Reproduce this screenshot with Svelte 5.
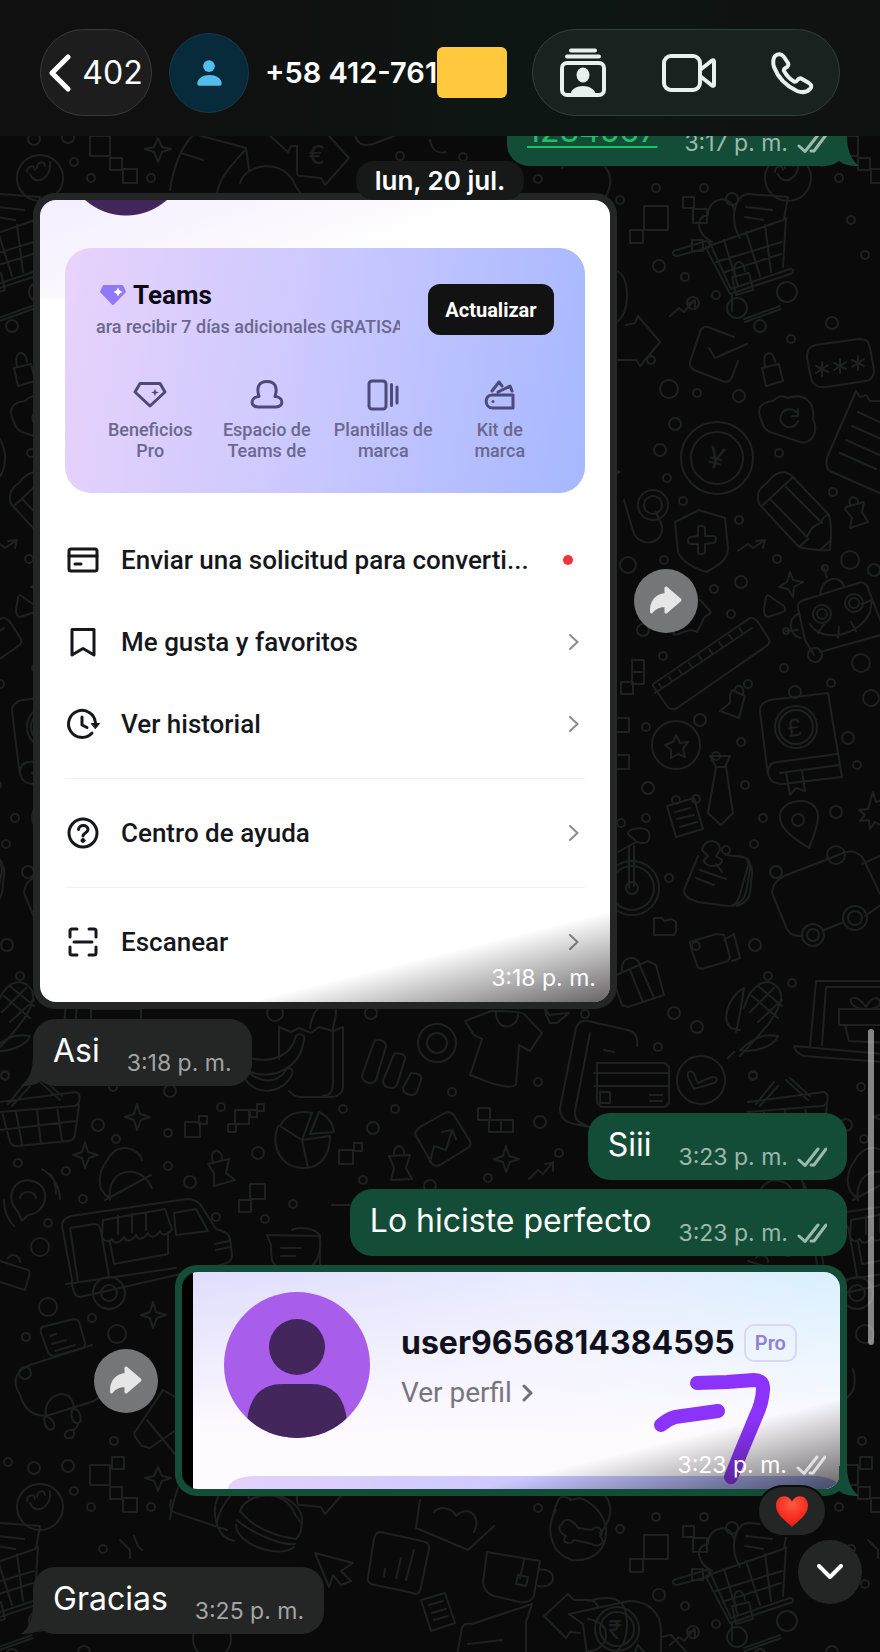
<script lang="ts">
	interface MenuItem {
		icon: string;
		label: string;
		dot?: boolean;
	}

	const menuGroups: MenuItem[][] = [
		[
			{ icon: 'card', label: 'Enviar una solicitud para converti...', dot: true },
			{ icon: 'bookmark', label: 'Me gusta y favoritos' },
			{ icon: 'history', label: 'Ver historial' }
		],
		[{ icon: 'help', label: 'Centro de ayuda' }],
		[{ icon: 'scan', label: 'Escanear' }]
	];

	const perks = [
		{ icon: 'gem', lines: ['Beneficios', 'Pro'] },
		{ icon: 'cloud', lines: ['Espacio de', 'Teams de'] },
		{ icon: 'templates', lines: ['Plantillas de', 'marca'] },
		{ icon: 'kit', lines: ['Kit de', 'marca'] }
	];

	// wallpaper: one sheet of doodles, repeated every 748 x 1329
	const sheetOffsets = [
		[-748, 0],
		[0, 0],
		[748, 0],
		[-748, 1329],
		[0, 1329],
		[748, 1329]
	];

	const dots = [
		[34, 139, 6], [68, 137, 6], [74, 162, 4], [91, 178, 4], [151, 178, 4], [400, 156, 4], [538, 179, 4],
		[463, 157, 4], [656, 188, 4], [704, 188, 4], [620, 200, 4], [732, 199, 6], [851, 220, 4],
		[659, 266, 6], [685, 277, 4], [716, 295, 4], [693, 303, 6], [865, 255, 4], [760, 326, 6], [791, 339, 4],
		[832, 323, 6], [651, 360, 4], [669, 389, 9], [697, 393, 4], [739, 396, 6], [675, 424, 6], [660, 450, 6],
		[667, 478, 4], [779, 453, 4], [683, 501, 4], [739, 520, 4], [664, 560, 4], [628, 565, 8], [741, 582, 6],
		[714, 589, 4], [833, 492, 4], [777, 559, 4], [850, 560, 9], [874, 570, 6], [643, 630, 6], [731, 614, 4],
		[663, 656, 4], [784, 668, 4], [748, 684, 4], [831, 683, 4], [795, 692, 6], [871, 698, 8], [700, 720, 6],
		[646, 727, 4], [741, 742, 4], [848, 738, 6], [716, 756, 4], [648, 788, 6], [745, 785, 4], [676, 800, 4],
		[696, 799, 4], [857, 765, 4], [646, 818, 4], [763, 818, 4], [836, 812, 6], [621, 823, 4], [754, 844, 4],
		[726, 850, 4], [836, 855, 9], [776, 872, 6], [669, 878, 4], [696, 946, 4], [755, 945, 6], [768, 976, 4],
		[792, 983, 4], [674, 1013, 6], [697, 1027, 6], [585, 1014, 4], [658, 1047, 4], [275, 1013, 8], [371, 1013, 6],
		[5, 1076, 4], [170, 1091, 6], [113, 1087, 4], [221, 1107, 4], [98, 1125, 6], [116, 1139, 4], [168, 1133, 4],
		[343, 1109, 4], [395, 1109, 4], [373, 1128, 6], [258, 1153, 6], [168, 1166, 4], [190, 1182, 6], [18, 1163, 4],
		[66, 1171, 4], [83, 1199, 4], [363, 1180, 4], [293, 1204, 4], [216, 1217, 4], [265, 1219, 4], [430, 1186, 6],
		[48, 1223, 4], [40, 1247, 9], [452, 1092, 4], [538, 1082, 4], [540, 1122, 6], [559, 1153, 4], [488, 1178, 4],
		[753, 1075, 4], [48, 1307, 9], [92, 1318, 4], [26, 1337, 4], [25, 1373, 6], [114, 1441, 4], [8, 1462, 4]
	];

	const squares = [
		[90, 136, 20], [110, 158, 12], [123, 169, 14], [644, 206, 24], [630, 230, 13], [683, 197, 11],
		[693, 209, 14], [692, 240, 11], [632, 660, 12], [632, 672, 12], [621, 682, 12], [615, 718, 14],
		[615, 755, 14], [185, 1122, 15], [199, 1116, 8], [235, 1110, 14], [228, 1124, 8], [250, 1110, 7],
		[257, 1104, 7], [339, 1150, 14], [354, 1143, 8], [239, 1200, 12], [250, 1184, 15], [478, 1108, 12],
		[489, 1120, 12], [501, 1120, 12], [112, 1457, 12]
	];

	const doodles = [
		// stars
		'M158 138l4 9 9 2-9 3-4 10-4-10-9-3 9-2z',
		'M607 460l4 9 9 3-9 4-4 9-4-9-9-4 9-3z',
		'M790 572l3 8 10 2-9 5-1 10-5-8-9-2 8-5z',
		'M137 1104l3 10 10 3-9 3-4 10-3-10-9-3 9-3z',
		'M85 1142l3 10 10 3-9 3-4 10-3-10-9-3 9-3z',
		'M506 1146l3 10 10 3-9 3-4 10-3-10-9-3 9-3z',
		'M153 1302l3 10 10 3-9 3-4 10-3-10-9-3 9-3z',
		'M873 792l3 10 9-3-3 9 6 6-7 3 1 9-7-4-5 7-1-9-9 1 5-6-6-5 9-1z',
		'M545 1008l4 7 20-2-12 10-7 0-4-8z',
		// small growth arrows
		'M670 316l9-8 5 4 10-12M687 304l8-3 0 8M738 551l10-7 5 4 12-8M756 541l9-1-2 8',
		'M529 1179l9-9 5 4 10-12M545 1164l8-1 0 8M283 1497l5-8 4 2 4-10',
		// shopping cart, heart and note
		'M677 250l29-9c4 0 5 6 1 7l-30 8c-5 0-6-5 0-6zM706 247l77-27 3-2-3 49M709 241l22 48 59-20c4 0 4 4 0 5l-60 20-24-46M716 262l66-20M725 272l56-18M724 240l14 46M746 232l14 44M765 225l6 47M732 295v16M744 319l36-13M745 322l36-13',
		'M712 242c-15-8-18-25-4-27 0-18 24-22 26-4M702 223M740 238c-12-20-4-44 8-44l40 3-4 22M746 207l26 3M745 217l18 3',
		// parcel, tags, coins
		'M588 272c30-8 39 0 39 24 0 24-12 32-39 36M588 290c12 2 18 8 18 16s-6 16-18 16M626 325l9-2 3-7 22 26-20 24-4-6h-28l-1-15',
		'M734 337l-26-10c-5-1-7 2-8 5l-10 30c-1 4 1 6 4 8l28 11c6 2 8 0 10-4l6-16M709 348l6 10 32-14',
		'M762 368l17-4 4 17-17 5zM765 366c-4-16 9-17 10-4M732 277l17-4 4 17-17 5zM735 275c-4-16 9-17 10-4',
		// pin code pad
		'M815 345l44-6c8 0 10 3 11 9l4 22c0 7-3 10-8 11l-40 6c-9 1-13-2-15-9l-4-20c0-8 2-11 8-13z',
		'M822 362v14M816 366l12 6M828 365l-12 8M840 359v14M834 363l12 6M846 362l-12 8M858 356v14M852 360l12 6M864 359l-12 8',
		// cloud
		'M762 422c-8-16 2-20 11-21 6-6 10-6 14-3 20-6 28 6 26 21 6 12-1 26-13 23l-30-10c-4-2-7-5-8-10zM796 412a9 9 0 1 0 2 9M798 409v7h-6',
		// long receipt
		'M856 391l-28 64c-3 8-2 15 4 17l50 22M856 391l4 6 6-2 4 6 12 0M858 412l30 14M852 426l34 15M846 440l36 16M840 453l36 16',
		// pencil and shield
		'M759 504c-3-11 0-15 8-21 9-12 18-14 26-6l36 38c3 11 2 22 1 35-12 1-22-1-31-3zM763 505l30-28M771 500l36 37c4-10 9-13 14-14 2-6 4-8 8-8M786 487l36 36M799 547l9-8M820 550l10-9',
		'M675 522l24-12 26 8 3 30c0 12-10 18-22 24-12-4-24-10-28-20zM698 528c0-3 7-3 7 0v8h8c4 0 4 6 0 7l-8 1v8c0 3-7 3-7 0v-8h-7c-4 0-4-6 0-7l7-1z',
		'M624 500l10 34c8 14 30 10 28-8l-6-14M600 388l-4-10',
		// weights
		'M846 507l18-5-2 10 6 10-18 6 2-10-7-9zM850 505c-3-10 8-10 8-2M732 690l13 6-3 10-3 12-19-7 10-8 0-8zM735 690c1-8 10-4 8 4M208 1164l21-5-3 14 9 7-21 6 0-13zM213 1162c-5-14 9-15 9-3M389 1156l21-1-4 13 6 11-21 1 3-12zM394 1155c-1-12 11-12 10 0',
		// robot
		'M805 640l-7-32c-1-4 2-7 6-8l54-17c6-2 10 2 11 8l14 36M805 640l9 15M820 652l64-18M820 595c2-20 22-20 24-8M824 568l3 10M798 614c-10 4-10 20 2 24M786 631l12-1M810 624c12 20 50 12 60-12l2-12-10 4M818 633l6-9M838 638l1-11M856 631l-5-9',
		'M766 598c0-4 4-3 6 0l12 8c3 4 0 6-4 7l-12 4c-4 0-4-5-4-8zM700 600l11 12c-2 4-8 4-8 8l-6 12c-10-6-20 6-24 2l14-22',
		// ruler
		'M653 684l97-66c4-1 6 2 8 4l11 17c1 4 0 5-4 8l-88 61c-4 2-7 2-10-2l-14-20zM655 693l97-65M662 688l-3-4M672 681l-3-4M682 674l-3-4M692 667l-3-4M702 660l-3-4M712 653l-3-4M722 646l-3-4M732 639l-3-4M742 632l-3-4',
		// medal, tie, book
		'M676 735l4 8 8-1-5 7 2 8-7-3-7 4 0-8-6-5 8-3z',
		'M710 756l20 0-5 11h-9zM716 767l-8 46 13 12 12-12-7-46',
		'M760 711c0-7 6-10 10-11l58-7 14 84-60 7c-12 0-14-8-15-16zM768 773c0-8 4-11 10-11l59-8M780 773l60-8M786 773l4 22 6-7 9 3-3-20',
		'M667 806l27-8 9 31-27 8zM675 812l15-4M677 819l17-4M680 827l17-5',
		// map pin, pinned notes
		'M809 848c-16-10-30-20-29-32 1-18 37-22 38 0 0 10-4 20-9 32zM698 856l-14 34c0 8 8 10 14 12l30 4c8 0 10-6 12-12l8-28c1-6-2-9-6-9l-16-2M735 856c14 0 16 5 15 14l-4 22c-2 8-6 12-14 14M747 862c6 2 6 12 4 20 0 12-2 20-14 24M700 870l26 9M696 878l18 7M702 850c2-12 18-12 18 0l-4 6 6 4c0 8-18 8-18 0l4-4zM716 864l6 8',
		// bicycle
		'M618 852l18-10M629 846v42M634 846v40M628 834c0-6 16-8 21-2 2 12-4 12-12 10z',
		// bus
		'M772 893c0-8 6-14 12-17l62-24c10-2 16 4 18 8l16 34M772 893l14 34c4 8 8 9 16 9M824 930l20-8M862 864l18-8M865 916l20-14',
		// folder, camera, gift
		'M654 918h8l2 3 8-2 4 3v10l-2 3-20 0zM690 942l26-8 8 1 6 22-2 4-26 8-4-1-7-20zM724 940l10-6 6 24-8 3M612 977l36-16 8 4 8 30-36 12-6-2zM622 972c-2-16 14-18 18-8M630 970l12 30M640 966l14 32',
		// corn
		'M740 1030c-20 0-16-24-2-38l6-4c-2 14-4 28-8 44M744 1008c4-14 12-26 24-26 10 2 16 12 12 20-4 16-18 30-40 54M740 1050c16 4 36-6 38-14-10-2-20-2-38 14zM734 1052l-6 6M752 996l26 22M758 986l24 20M750 1012l24-24M758 1022l24-22',
		// laptop
		'M816 981h70M816 981l-6 66M826 987h60M826 987l-4 58M794 1046l90 8v8l-80-6c-6-2-9-6-10-10zM839 1009h50v16h-50zM845 1025l4 16 40 2M862 1009c-20-4-10-22 4-2 10-20 24 0 4 2',
		// banana and paper bag
		'M279 1027v32M279 1027l12 5 8-4 12 5 8-6 14 4 10-4 0 60c0 6-6 10-12 10h-30c-6 0-8-2-12-6M336 1010c0 10-3 14-3 20v54c0 8-4 12-10 12M310 1028c2-12 6-20 12-22',
		'M250 1058c24 6 42-4 46-22 4-4 10 0 8 4-4 28-30 40-54 32M250 1074c16 10 28 8 36-4 4-4 8 0 6 4-8 20-36 22-46 6',
		// bars, gear, shirt
		'M374 1042c2-4 12-2 12 4l-10 34c-4 6-14 2-14-4zM394 1054c4-2 12 0 11 5l-8 26c-4 6-14 2-14-4zM411 1073c6 0 12 2 10 7l-4 12c-4 6-14 2-14-4z',
		'M465 1021l26-10c10 0 34 0 34 4l17 18-12 18-11-6-3 40c-10 6-34-6-46-10l12-36-8-4zM496 1012c0 20 22 18 22 2',
		// phone with credit card
		'M590 1127l-16-3c-10-2-14-8-14-16l16-80c2-6 6-8 12-7l40 9c8 2 10 8 9 16M586 1125c-8-2-12-6-11-14l15-78M604 1050l10 2',
		'M597 1063h68l4 4v36l-4 4h-64l-4-4v-40zM594 1073h75M594 1086h75M600 1092h10v11h-10zM650 1095h12M650 1101h12',
		'M688 1077c-2-8 6-8 8 2l2 4 14-6c6 0 6 4 2 6l-20 6z',
		// baskets
		'M0 1102l76-10c6 2 4 14-2 14l-74 6M2 1112l8 30c2 4 4 4 8 4l50-5c4 0 6-2 7-6l4-30M0 1130l76-9M16 1112l6 32M37 1110l4 34M57 1107l5 34M8 1104l18-22M38 1080l22 20M12 1106l18-20M42 1078l20 18',
		// pie chart
		'M302 1140l-22-14c6-12 18-16 32-13zM302 1140l6 28M302 1140l28-4c0 20-10 32-26 32-22 0-34-20-26-42M310 1134l9-22c8 4 14 10 15 20z',
		'M415 1134c0-4 6-8 12-11l18-10c4-2 8 0 10 4l15 24c2 4 0 6-4 8l-26 16c-4 2-8 0-9-3zM430 1162l4-16 12 4 6-20M442 1132l10-2 4 9',
		// taco and voice bubble
		'M110 1200c-2-14 4-26 16-28 14-2 22 8 26 16M110 1198c-16-8-10-28-4-36 12-24 34-12 36-2M105 1200l46-25',
		'M18 1212c-16-18 0-36 14-31 20 4 16 32-4 34l-6 6zM20 1198c2-8 14-8 16 0M42 1169c10 6 18 18 18 30M50 1174c4 4 6 12 6 20M4 1200c0 12 4 20 10 26',
		// food truck
		'M72 1280l-10-54c0-6 4-8 9-10l116-17c8 0 12 3 15 8l14 22c16 4 14 8 16 26 0 8-6 8-12 10l-140 32c-4 0-8-6-8-17zM70 1228l24-4c6 0 6 4 7 8l8 44M70 1228l8 54M103 1220l62-11 7 20c-4 6-10 8-12 2-4 6-10 8-12 2-4 6-10 8-12 2-4 6-10 8-12 2-4 6-10 8-12 2-4 4-9 2-10-3zM118 1216v18M132 1214v18M146 1212v18M110 1242l4 22 54-10v-22M174 1213l22-4 12 22-32 4zM66 1284l110-16M215 1244l14-3M216 1250l14-3',
		'M0 1261l28 9c2 2 2 4 1 6l-4 14-25-8M8 1258c4-6 12-2 12 4',
		'M42 1327l32-8c4 0 5 2 6 6l5 18c0 4-1 5-5 6l-26 7c-4 0-5-2-6-4l-7-19c-1-4 0-5 1-6zM50 1336l6-2M52 1344l14-4M55 1351l20-6',
		// headset
		'M20 1395c-10-16-2-25 10-30l62-20M20 1395c6 20 20 24 36 18l38-12c10-6 16-14 11-32M46 1416c-4-22 26-32 28-8M72 1410c6-4 10 6 8 12-6 4-10-4-8-12zM44 1418c4-4 12 4 10 10-6 6-10-4-10-10zM78 1424c-2 6-4 6-8 6-8 2-6 10 0 8 4 0 4-4 4-8',
		'M135 1432l28-42 14 8M134 1432c0 6 4 8 8 14l8 2 26-18M147 1420l28 34',
		// chat bubble
		'M267 1235l52 1c4 10-2 30-10 31h-30c-8-2-8-10-8-22zM281 1248h20M281 1256h14M292 1230c6-4 24-2 28 6v36M332 1205h24',
		// house, cake and euro tags
		'M170 190c4-26 12-44 24-56l52 14 3 22M246 149c-16 18-26 28-29 44M181 153l22 7M240 183c4-18 44-28 56 4l6 8M268 134l20 18 3-6h6v26c0 4 2 4 4 4l20 2 4 7 24-27-20-22',
		'M355 134c2 12 10 12 18 10l26-10M430 140c2 12 10 14 16 12M562 168l10-20h20l14 20c10 14 0 30-6 36',
		// envelope, burger
		'M171 1500c-2 10 0 12 8 14l48 16M218 1497c-6 12-4 40 16 44M240 1511c6-20 54-24 62 6 0 14-2 18-6 22-14-2-40-8-56-28zM237 1520c8 8 40 26 58 24M236 1525c0 20 44 34 58 22',
		'M420 1500l-4 28 52 22 26-24M434 1512c8-8 20-2 22 4 12-12 26 0 18 16',
		'M552 1519c6-26 10-24 18-20M556 1510c-12 20-4 44 16 50 20 2 36-10 34-32-2-14-14-26-26-30l-10 2M562 1524c4-10 14 0 16 4l14 2c4-6 14 0 8 6 8 8-4 12-8 8l-18-4c-4 6-14 2-8-4-8-4-8-10-4-12z',
		// mug and chart tile
		'M487 1552l53 9-6 34c-2 6-8 8-14 7l-26-6c-8-2-10-8-11-14zM538 1570c20-4 20 20 0 16M524 1560l-4 18M518 1575l10 2-2 9-10-2z',
		'M380 1532l42 9c6 1 8 4 7 8l-8 38c-1 6-4 8-8 6l-38-8c-6-1-8-4-7-8l6-38c1-5 3-7 6-7zM384 1576l1-7M396 1578l5-20M406 1580l8-30M315 1553l38 10-12 8 10 10-10 4-8-10-4 12z',
		'M421 1600l24-7 10 30-24 8zM429 1605l14-4M432 1613l14-4M434 1620l14-4M544 1616l24-22 6 6h14c6 0 10 4 10 8M544 1616l22 22 4-6 10 1M569 1614l60-13c20 0 32 12 32 30v24M569 1614l14 10 4 30M661 1637l10-2 18 20',
		'M456 1660l6-32c2-6 6-4 10-4l60-20-6 18v40M468 1644l34-4M120 1540l10 10 0 8M134 1536l4 10 4 4'
	];

	const rings = [
		[40, 178, 23], [737, 308, 10], [787, 292, 10], [717, 458, 36], [717, 458, 26], [653, 505, 15],
		[653, 505, 9], [822, 614, 9], [822, 614, 5], [854, 603, 9], [854, 603, 5], [815, 655, 7],
		[861, 663, 9], [676, 745, 24], [796, 727, 21], [796, 727, 17], [798, 820, 6], [632, 888, 27],
		[632, 888, 22], [632, 888, 6], [813, 935, 11], [813, 935, 6], [855, 918, 12], [855, 918, 7],
		[701, 1080, 24], [437, 1043, 19], [437, 1043, 10], [109, 1293, 16], [109, 1293, 8], [117, 1334, 9],
		[617, 1629, 22], [617, 1629, 17], [212, 1639, 19], [825, 568, 3], [786, 631, 3]
	];

	let scrolledUp = $state(true);
</script>

{#snippet icon(name: string)}
	<svg class="icon" viewBox="0 0 32 32" aria-hidden="true">
		{#if name === 'card'}
			<rect x="2" y="5" width="28" height="22" rx="2" />
			<path d="M2 12H30M8 20h6" />
		{:else if name === 'bookmark'}
			<path d="M5 3.500h22v25.500L16 22.500 5 29z" />
		{:else if name === 'history'}
			<path d="M25 25A13.500 13.500 0 1 1 28.500 15M15 9v8l5 2.500" />
			<path class="solid" d="M24.500 15.500h8l-4 5z" />
		{:else if name === 'help'}
			<circle cx="16" cy="16" r="14" />
			<path d="M11.500 12.500c.5-5.500 9.500-5 9.500 0 0 3.500-5 3.500-5 6.500" />
			<circle class="solid" cx="16" cy="23.500" r="2" />
		{:else if name === 'scan'}
			<path d="M3 11V5q0-2 2-2h5M22 3h5q2 0 2 2v6M29 21v6q0 2-2 2h-5M10 29H5q-2 0-2-2v-6M7 16h18" />
		{:else if name === 'gem'}
			<path d="M6 4.500h20l5 8.500L16 27 1 13z" />
			<path class="solid" d="M21 9.500l1 3 3 1-3 1-1 3-1-3-3-1 3-1z" />
		{:else if name === 'cloud'}
			<path d="M7 28C-1 28-1 18 8 17.500C5 8 8 2.500 16 2.500S27 8 24 17.500C33 18 33 28 25 28Z" />
		{:else if name === 'templates'}
			<rect x="2" y="2" width="17" height="28" rx="3" />
			<path d="M24.500 5.500v21M30 8v16" />
		{:else if name === 'kit'}
			<path d="M8 16h21v13H9c-9 0-9-13-1-13zM8 12L15 3l3 4M14 13l12-6 2 5" />
			<circle class="solid" cx="9" cy="22.500" r="1.500" />
		{/if}
	</svg>
{/snippet}

{#snippet ticks()}
	<svg class="ticks" viewBox="0 0 30 20" aria-label="Entregado" role="img">
		<path d="M2 13l6 5.500L21 2M14 18l3 0L29 2" />
	</svg>
{/snippet}

{#snippet tail(side: string)}
	<svg class="tail {side}" viewBox="0 0 20 30" aria-hidden="true">
		<path d="M0 0H8C8 14 12 24 20 30C12 30 4 29 0 25Z" />
	</svg>
{/snippet}

{#snippet forward()}
	<button class="forward" aria-label="Reenviar">
		<svg viewBox="0 0 64 64" aria-hidden="true">
			<path d="M32 19L46 31 32 43V36.500C25 36.500 21 38 17.500 43 17 33 22 26 32 25.500Z" />
		</svg>
	</button>
{/snippet}

<div class="app">
	<svg class="wallpaper" aria-hidden="true">
		<defs>
			<g id="sheet">
				{#each dots as [x, y, r]}
					<circle cx={x} cy={y} {r} />
				{/each}
				{#each rings as [x, y, r]}
					<circle cx={x} cy={y} {r} />
				{/each}
				{#each squares as [x, y, s]}
					<rect {x} {y} width={s} height={s} />
				{/each}
				{#each doodles as d}
					<path {d} />
				{/each}
				<path d="M27 172c0-6 8-8 8-2M37 168c0-6 8-8 8-2M30 174c4 12 22 6 20-12" />
				<text x="308" y="164" font-size="26">€</text>
				<text x="708" y="469" font-size="30" transform="rotate(14 717 458)">¥</text>
				<text x="787" y="736" font-size="24" transform="rotate(-8 796 727)">£</text>
				<text x="608" y="1639" font-size="26">₹</text>
			</g>
		</defs>
		{#each sheetOffsets as [x, y]}
			<use href="#sheet" {x} {y} />
		{/each}
	</svg>

	<header>
		<button class="back" aria-label="Volver, 402 sin leer">
			<svg viewBox="0 0 22 38" aria-hidden="true"><path d="M19 3L3 19l16 16" /></svg>
			<span>402</span>
		</button>
		<div class="contact-pic">
			<svg viewBox="0 0 80 80" aria-hidden="true">
				<circle cx="40" cy="33" r="6" />
				<path d="M28 51c0-12 25-12 25 0q0 2-2 2H30q-2 0-2-2z" />
			</svg>
		</div>
		<h1>+58 412-761</h1>
		<span class="redacted"></span>
		<div class="actions">
			<button aria-label="Contacto">
				<svg width="46" height="48" viewBox="0 0 46 48" aria-hidden="true">
					<path class="line" d="M11 1.500h24M7 7.500h32" />
					<rect class="line" x="2" y="14" width="42" height="32" rx="5" />
					<ellipse cx="23" cy="26" rx="6.500" ry="7.500" />
					<path d="M10 46c2-12 24-12 26 0z" />
				</svg>
			</button>
			<button aria-label="Videollamada">
				<svg width="54" height="38" viewBox="0 0 54 38" aria-hidden="true">
					<rect class="line" x="2" y="2" width="36" height="34" rx="7" />
					<path class="line" d="M38 16l12-9.500q2-1 2 1v23q0 2-2 1L38 22" />
				</svg>
			</button>
			<button aria-label="Llamar">
				<svg width="42" height="42" viewBox="0 0 42 42" aria-hidden="true">
					<path
						class="line"
						d="M4 4Q9 0 13 5L17 11Q18 13 16 15Q12 17 13 19Q17 26 23 29.500Q25 30.500 27 27.500Q29 25.500 31 27L38 31Q42 34 39 37Q34 42 26 39Q9 31 3 15Q1 8 4 4Z"
					/>
				</svg>
			</button>
		</div>
	</header>

	<main>
		<div class="row out first">
			<div class="bubble">
				<a class="text" href="#1234567">1234567</a>
				<span class="meta"><time>3:17 p. m.</time>{@render ticks()}</span>
				{@render tail('right')}
			</div>
		</div>

		<div class="date"><span>lun, 20 jul.</span></div>

		<div class="row in">
			<div class="media wide">
				<div class="photo account">
					<div class="cover"><div class="cut-avatar"></div></div>
					<section class="teams">
						<div class="teams-head">
							<div class="teams-copy">
								<h2>
									<svg viewBox="0 0 26 20" aria-hidden="true">
										<path fill="#9078f8" d="M4 0h18q1 0 2 2l2 5L14 19.500q-1 1-2 0L0 7l2-5Q3 0 4 0z" />
										<path fill="#fff" d="M18 2.500l1.500 3 3 1.500-3 1.500-1.500 3-1.500-3-3-1.500 3-1.500z" />
									</svg>
									Teams
								</h2>
								<p>ara recibir 7 días adicionales GRATISA</p>
							</div>
							<button class="upgrade">Actualizar</button>
						</div>
						<ul class="perks">
							{#each perks as perk}
								<li>
									{@render icon(perk.icon)}
									<span>{perk.lines[0]}<br />{perk.lines[1]}</span>
								</li>
							{/each}
						</ul>
					</section>
					<nav>
						{#each menuGroups as group}
							<div class="group">
								{#each group as item}
									<button class="item">
										{@render icon(item.icon)}
										<span>{item.label}</span>
										{#if item.dot}
											<i class="dot"></i>
										{:else}
											<svg class="chevron" viewBox="0 0 10 16" aria-hidden="true">
												<path d="M1 1l7.500 7L1 15" />
											</svg>
										{/if}
									</button>
								{/each}
							</div>
						{/each}
					</nav>
					<span class="stamp"><time>3:18 p. m.</time></span>
				</div>
			</div>
			{@render forward()}
		</div>

		<div class="row in after-media">
			<div class="bubble">
				<span class="text">Asi</span>
				<span class="meta"><time>3:18 p. m.</time></span>
				{@render tail('left')}
			</div>
		</div>

		<div class="row out turn">
			<div class="bubble">
				<span class="text">Siii</span>
				<span class="meta"><time>3:23 p. m.</time>{@render ticks()}</span>
			</div>
		</div>

		<div class="row out">
			<div class="bubble">
				<span class="text">Lo hiciste perfecto</span>
				<span class="meta"><time>3:23 p. m.</time>{@render ticks()}</span>
			</div>
		</div>

		<div class="row out">
			{@render forward()}
			<div class="media profile-media">
				<div class="photo profile">
					<div class="profile-main">
						<svg class="avatar" viewBox="0 0 146 146" aria-hidden="true">
							<defs>
								<clipPath id="round"><circle cx="73" cy="73" r="73" /></clipPath>
							</defs>
							<g clip-path="url(#round)">
								<rect width="146" height="146" fill="#a85eea" />
								<circle cx="73" cy="55" r="28" fill="#43265c" />
								<path d="M23 146v-16q3-38 36-38h28q33 0 36 38v16z" fill="#43265c" />
							</g>
						</svg>
						<div class="who">
							<div class="name"><strong>user9656814384595</strong><span class="pro">Pro</span></div>
							<a href="#perfil">
								Ver perfil
								<svg viewBox="0 0 12 18" aria-hidden="true"><path d="M2 2l7 7-7 7" /></svg>
							</a>
						</div>
					</div>
					<div class="next-card"></div>
					<svg class="scribble" width="150" height="130" viewBox="0 0 150 130" aria-hidden="true">
						<path d="M49 17L79 16L106 14Q116 14 115 24Q114 38 108 50L93 86L83 111" />
						<path d="M13 59Q20 53 27 51L70 45" />
					</svg>
					<span class="stamp"><time>3:23 p. m.</time>{@render ticks()}</span>
				</div>
				{@render tail('right')}
				<span class="reaction">
					<svg viewBox="0 0 32 31" role="img" aria-label="Me encanta">
						<defs>
							<radialGradient id="heart" cx="50%" cy="25%" r="75%">
								<stop offset="0" stop-color="#ff5a43" />
								<stop offset="60%" stop-color="#f92f22" />
								<stop offset="100%" stop-color="#dd1c18" />
							</radialGradient>
						</defs>
						<path
							fill="url(#heart)"
							d="M16 31C12 26 0 20 0 9.500C0-1 12-3 16 5.500C20-3 32-1 32 9.500C32 20 20 26 16 31Z"
						/>
					</svg>
				</span>
			</div>
		</div>

		<div class="row in after-reaction">
			<div class="bubble">
				<span class="text">Gracias</span>
				<span class="meta"><time>3:25 p. m.</time></span>
				{@render tail('left')}
			</div>
		</div>
	</main>

	<div class="scrollbar"></div>
	{#if scrolledUp}
		<button class="to-bottom" aria-label="Ir al final" onclick={() => (scrolledUp = false)}>
			<svg viewBox="0 0 26 16" aria-hidden="true"><path d="M2 2l11 11L24 2" /></svg>
		</button>
	{/if}
</div>

<style>
	:global(body) {
		background: #0a0a0a;
	}

	.app {
		position: relative;
		overflow: hidden;
		background: #0a0a0a;
		color: #fff;
		font-family: Inter, 'Liberation Sans', sans-serif;
	}

	.app * {
		box-sizing: border-box;
	}

	button {
		padding: 0;
		border: none;
		background: none;
		color: inherit;
		font: inherit;
		cursor: pointer;
	}

	svg {
		flex: none;
		fill: none;
		stroke-linecap: round;
		stroke-linejoin: round;
	}

	.wallpaper {
		position: absolute;
		inset: 0;
		width: 100%;
		height: 100%;
		stroke: #1f2020;
		stroke-width: 2;
	}

	.wallpaper text {
		fill: #1f2020;
		stroke: none;
	}

	header {
		position: relative;
		z-index: 2;
		display: flex;
		align-items: center;
		height: 136px;
		padding: 9px 40px 0;
		background: linear-gradient(90deg, #101010 20%, #0d1613 60%, #0f1211);
	}

	.back {
		display: flex;
		align-items: center;
		justify-content: center;
		gap: 11px;
		width: 112px;
		height: 87px;
		border: 1px solid #3a3a3a;
		border-radius: 44px;
		background: #1d1d1d;
		font-size: 32px;
	}

	.back svg {
		width: 22px;
		height: 38px;
		stroke: #fff;
		stroke-width: 5;
	}

	.contact-pic {
		flex: none;
		width: 80px;
		height: 80px;
		margin: 0 16px 0 17px;
		border: 1px solid #163848;
		border-radius: 50%;
		background: #082b3b;
	}

	.contact-pic svg {
		display: block;
		fill: #53bdeb;
	}

	h1 {
		margin: 0;
		font-size: 29px;
		font-weight: 600;
		white-space: nowrap;
	}

	.redacted {
		flex: none;
		width: 70px;
		height: 51px;
		border-radius: 6px;
		background: #ffc83d;
	}

	.actions {
		display: flex;
		align-items: center;
		justify-content: space-between;
		width: 308px;
		height: 87px;
		margin-left: auto;
		padding: 0 26px 0 27px;
		border: 1px solid #30403c;
		border-radius: 44px;
		background: #1a2220;
	}

	.actions svg {
		display: block;
		overflow: visible;
		fill: #e9f1ee;
	}

	.actions .line {
		fill: none;
		stroke: #e9f1ee;
		stroke-width: 4;
	}

	main {
		position: relative;
		display: flex;
		flex-direction: column;
		gap: 9px;
		padding: 0 33px 18px;
	}

	.row {
		display: flex;
		align-items: center;
		gap: 17px;
	}

	.row.out {
		justify-content: flex-end;
	}

	.row.first {
		margin-top: -37px;
	}

	.row.after-media {
		margin-top: 1px;
	}

	.row.turn {
		margin-top: 18px;
	}

	.row.after-reaction {
		margin-top: 62px;
	}

	.bubble {
		position: relative;
		display: flex;
		gap: 27px;
		height: 67px;
		padding: 12px 20px 8px;
		border-radius: 22px;
		background: #242626;
	}

	.out .bubble {
		background: #144d37;
	}

	.text {
		font-size: 32px;
		line-height: 40px;
		white-space: nowrap;
	}

	a.text {
		color: #21c063;
		text-decoration-thickness: 2px;
		text-underline-offset: 4px;
	}

	.meta {
		display: flex;
		align-items: center;
		align-self: flex-end;
		gap: 9px;
		color: #a3a5a5;
		font-size: 23px;
		line-height: 30px;
		white-space: nowrap;
	}

	.out .meta {
		color: #9db8ad;
	}

	.ticks {
		width: 30px;
		height: 20px;
		stroke: currentColor;
		stroke-width: 3;
	}

	.tail {
		position: absolute;
		bottom: 0;
		width: 20px;
		height: 30px;
		fill: #242626;
	}

	.out .tail {
		fill: #144d37;
	}

	.tail.right {
		right: -12px;
	}

	.tail.left {
		left: -12px;
		transform: scaleX(-1);
	}

	.date {
		position: relative;
		z-index: 1;
		display: flex;
		justify-content: center;
		margin: -14px 0 -16px;
	}

	.date span {
		padding: 0 19px;
		border-radius: 18px;
		background: #161918;
		font-size: 26px;
		font-weight: 600;
		line-height: 39px;
	}

	.media {
		position: relative;
		padding: 7px;
		border-radius: 22px;
		background: #242626;
	}

	.out .media {
		background: #144d37;
	}

	.media.wide {
		width: 584px;
	}

	.media.profile-media {
		width: 672px;
	}

	.photo {
		position: relative;
		overflow: hidden;
		border-radius: 16px;
		background: #fff;
		font-family: Roboto, 'Liberation Sans', sans-serif;
	}

	.account {
		padding-bottom: 19px;
		background:
			linear-gradient(160deg, #f4eeff, #fff 60%) top / 100% 98px no-repeat,
			#fff;
	}

	.cover {
		height: 48px;
	}

	.cut-avatar {
		width: 124px;
		height: 16px;
		margin-left: 24px;
		background: radial-gradient(circle 62px at 62px -46px, #43265c 61px, transparent 62px);
	}

	.teams {
		margin: 0 25px;
		padding: 32px 27px;
		border-radius: 26px;
		background: linear-gradient(100deg, #e8d3fb, #cdc9ff 45%, #a6b8ff);
		color: #6a688f;
	}

	.teams-head {
		display: flex;
		align-items: center;
		justify-content: space-between;
		padding: 0 4px;
	}

	.teams-copy {
		width: 304px;
	}

	h2 {
		display: flex;
		align-items: center;
		gap: 7px;
		margin: 0 0 5px;
		padding-left: 4px;
		color: #0b0b14;
		font-size: 26px;
		font-weight: 700;
		line-height: 30px;
	}

	h2 svg {
		width: 26px;
		height: 20px;
	}

	.teams-copy p {
		overflow: hidden;
		margin: 0;
		font-size: 18px;
		font-weight: 500;
		line-height: 24px;
		white-space: nowrap;
	}

	.upgrade {
		width: 126px;
		height: 51px;
		border-radius: 12px;
		background: #121212;
		color: #fff;
		font-size: 20px;
		font-weight: 700;
	}

	.perks {
		display: grid;
		grid-template-columns: repeat(4, 1fr);
		margin: 40px 0 0;
		padding: 0;
		list-style: none;
	}

	.perks li {
		display: flex;
		flex-direction: column;
		align-items: center;
		gap: 8px;
		font-size: 18px;
		font-weight: 500;
		line-height: 21px;
		text-align: center;
		white-space: nowrap;
	}

	.icon {
		width: 32px;
		height: 32px;
		overflow: visible;
		stroke: #16171c;
		stroke-width: 3;
	}

	.perks .icon {
		stroke: #4d4a78;
	}

	.icon .solid {
		fill: #16171c;
		stroke-width: 1;
	}

	.perks .icon .solid {
		fill: #4d4a78;
		stroke: none;
	}

	nav {
		padding: 26px 25px 0;
	}

	.group + .group {
		margin-top: 13px;
		padding-top: 13px;
		border-top: 1px solid #f1f1f1;
	}

	.item {
		display: flex;
		align-items: center;
		gap: 22px;
		width: 100%;
		height: 82px;
		padding: 0 6px 0 2px;
		color: #16171c;
		font-size: 26px;
		font-weight: 500;
		text-align: left;
	}

	.item span {
		flex: 1;
		overflow: hidden;
		white-space: nowrap;
	}

	.dot {
		width: 10px;
		height: 10px;
		margin-right: 6px;
		border-radius: 50%;
		background: #f0343f;
	}

	.chevron {
		width: 10px;
		height: 16px;
		stroke: #8c8c8f;
		stroke-width: 2;
	}

	/* time over the dark corner of a photo */
	.stamp {
		position: absolute;
		right: 0;
		bottom: 0;
		left: 0;
		display: flex;
		align-items: flex-end;
		justify-content: flex-end;
		gap: 9px;
		height: 100px;
		padding: 0 14px 9px;
		background: linear-gradient(166deg, transparent calc(100% - 88px), rgba(16, 12, 14, 0.64));
		font-family: Inter, 'Liberation Sans', sans-serif;
		font-size: 23px;
		line-height: 30px;
	}

	.stamp .ticks {
		align-self: flex-end;
		margin-bottom: 5px;
		opacity: 0.7;
	}

	.forward {
		flex: none;
		width: 64px;
		height: 64px;
		border-radius: 50%;
		background: #747677;
	}

	.forward svg {
		display: block;
		fill: #e6e6e6;
		stroke: #e6e6e6;
		stroke-width: 3;
	}

	/* the picture was saved with a black strip on its left */
	.profile {
		padding-left: 11px;
		background:
			linear-gradient(90deg, #000 11px, transparent 11px),
			linear-gradient(rgba(255, 255, 255, 0), #fefbff 75%),
			linear-gradient(90deg, #dfdcfd, #e9ebfe 55%, #d9f0fe);
	}

	.profile-main {
		display: flex;
		gap: 31px;
		height: 204px;
		padding: 20px 0 0 31px;
	}

	.avatar {
		width: 146px;
		height: 146px;
	}

	.who {
		padding-top: 32px;
	}

	.name {
		display: flex;
		align-items: center;
		gap: 9px;
		margin-bottom: 14px;
		color: #11111d;
		font-family: Inter, 'Liberation Sans', sans-serif;
		font-size: 32px;
		line-height: 38px;
	}

	.pro {
		padding: 0 9px;
		border: 2px solid #dcd7f5;
		border-radius: 10px;
		color: #9080d6;
		font-family: Roboto, 'Liberation Sans', sans-serif;
		font-size: 20px;
		font-weight: 600;
		line-height: 34px;
	}

	.who a {
		display: flex;
		align-items: center;
		gap: 10px;
		color: #77767f;
		font-size: 28px;
		line-height: 34px;
		text-decoration: none;
	}

	.who a svg {
		width: 12px;
		height: 18px;
		stroke: #6f6e76;
		stroke-width: 3;
	}

	.next-card {
		height: 13px;
		margin-left: 35px;
		border-radius: 26px 26px 0 0 / 13px 13px 0 0;
		background: linear-gradient(90deg, #e3d2fb, #cdc9ff 45%, #a6b8ff);
	}

	.scribble {
		position: absolute;
		right: 42px;
		bottom: -7px;
		stroke: #8c33fb;
		stroke-width: 14;
	}

	.reaction {
		position: absolute;
		right: 20px;
		bottom: -41px;
		display: flex;
		align-items: center;
		justify-content: center;
		width: 70px;
		height: 52px;
		border: 2px solid #0a0a0a;
		border-radius: 26px;
		background: #242626;
	}

	.reaction svg {
		width: 32px;
		height: 31px;
	}

	.scrollbar {
		position: absolute;
		top: 1029px;
		right: 6px;
		width: 6px;
		height: 316px;
		border-radius: 3px;
		background: rgba(255, 255, 255, 0.5);
	}

	.to-bottom {
		position: absolute;
		right: 18px;
		bottom: 48px;
		display: flex;
		align-items: center;
		justify-content: center;
		width: 64px;
		height: 64px;
		border-radius: 50%;
		background: #242626;
	}

	.to-bottom svg {
		width: 26px;
		height: 16px;
		stroke: #fff;
		stroke-width: 4;
	}
</style>
